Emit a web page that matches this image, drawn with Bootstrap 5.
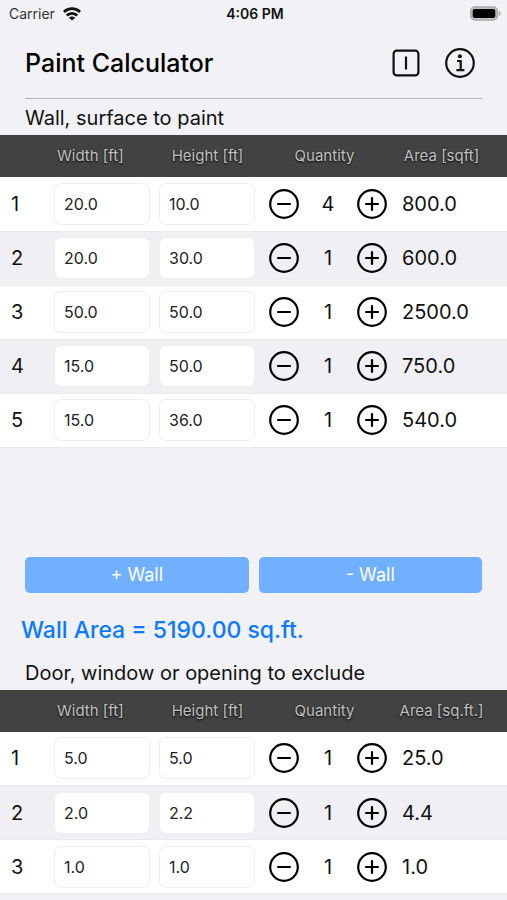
<!DOCTYPE html>
<html lang="en">
<head>
<meta charset="utf-8">
<meta name="viewport" content="width=device-width, initial-scale=1">
<title>Paint Calculator</title>
<link href="https://cdn.jsdelivr.net/npm/bootstrap@5.3.0/dist/css/bootstrap.min.css" rel="stylesheet">
<style>
body { font-family: Inter, "Liberation Sans", sans-serif; background: #f2f1f6; color: #111; overflow-x: hidden; }
.status-bar { height: 28px; padding: 0 6px 0 9px; font-size: 14px; line-height: 28px; color: #333; }
.status-time { color: #111; }
.app-head { height: 71px; margin: 0 25px; border-bottom: 1px solid #b4b3b8; }
.app-title { font-size: 25px; line-height: 32px; font-weight: 500; color: #000; }
.tool-btn { line-height: 0; color: #111; }
.head-tools { gap: 25px; padding-right: 7px; }
.section-label { font-size: 20px; line-height: 34px; padding-top: 2px; margin: 0 25px; font-weight: 400; color: #111; }
.calc-table { table-layout: fixed; width: 100%; color: #111; }
.calc-table .c-num { width: 50px; }
.calc-table .c-qty { width: 129px; }
.calc-table .c-area { width: 118px; }
.calc-table th, .calc-table td { padding: 0; vertical-align: middle; }
.calc-table thead tr { height: 42px; background: #424242; color: #c0c0c0; font-size: 15px; line-height: 20px; text-shadow: 0 1px 2px #000; }
.calc-table thead th { font-weight: 400; text-align: center; white-space: nowrap; }
.calc-table thead .h-width { text-align: left; padding-left: 7px; }
.calc-table thead .h-area { padding-right: 13px; }
.calc-table tbody tr { height: 54px; background: #fff; border-bottom: 1px solid #e9e8ec; font-size: 20px; line-height: 28px; }
.calc-table tbody tr:nth-child(even) { background: #f0eff4; }
.calc-table tbody th { font-weight: 400; padding-left: 11px; }
.calc-table .v-area { padding-left: 13px; }
.size-input { height: 42px; width: calc(100% - 9px); margin-left: 4px; padding: 0 9px; font-size: 16px; color: #222; border: 1px solid #eeedf0; border-radius: 7px; }
.qty { padding: 0 2px 0 9px; }
.wall-space { height: 109px; }
.wall-actions { margin: 0 25px; gap: 10px; }
.btn-wall { height: 36px; font-size: 18px; line-height: 24px; --bs-btn-padding-y: 0; --bs-btn-color: #fff; --bs-btn-bg: #70b0ff; --bs-btn-hover-color: #fff; --bs-btn-hover-bg: #579fff; --bs-btn-border-width: 0; --bs-btn-border-radius: 5px; }
.wall-total { margin: 21px 21px 8px; font-size: 23px; line-height: 32px; font-weight: 500; color: #0a7aff; }
</style>
<script src="https://cdn.jsdelivr.net/npm/bootstrap@5.3.0/dist/js/bootstrap.bundle.min.js"></script>
</head>
<body>
<svg class="d-none" aria-hidden="true">
  <symbol id="i-minus" viewBox="0 0 30 30"><circle cx="15" cy="15" r="13.8" fill="none" stroke="#000" stroke-width="2.2"/><path d="M9 15h12" stroke="#000" stroke-width="2.2" stroke-linecap="round"/></symbol>
  <symbol id="i-plus" viewBox="0 0 30 30"><circle cx="15" cy="15" r="13.8" fill="none" stroke="#000" stroke-width="2.2"/><path d="M9 15h12M15 9v12" stroke="#000" stroke-width="2.2" stroke-linecap="round"/></symbol>
</svg>

<div class="status-bar row g-0">
  <div class="col d-flex align-items-center gap-2"><span>Carrier</span>
    <svg width="18" height="14" viewBox="0 0 18 14" fill="none" stroke="#111" stroke-width="2.7"><path d="M.9 5a11.5 11.5 0 0 1 16.2 0M3.8 8.5a7.4 7.4 0 0 1 10.4 0"/><path d="M9 13.6L5.9 10.7a4.4 4.4 0 0 1 6.2 0z" fill="#111" stroke="none"/></svg>
  </div>
  <div class="col-auto fw-semibold status-time">4:06 PM</div>
  <div class="col d-flex align-items-center justify-content-end">
    <svg width="31" height="16" viewBox="0 0 31 16"><rect x=".8" y="1" width="26.5" height="13" rx="4" fill="#c4c4c6" stroke="#aaa" stroke-width="1.5"/><rect x="2.7" y="3" width="22.6" height="9" rx="2"/><path d="M28.7 5q2 .8 2 2.5t-2 2.5z" fill="#aaa"/></svg>
  </div>
</div>

<header class="app-head d-flex align-items-center justify-content-between">
  <h1 class="app-title mb-0">Paint Calculator</h1>
  <div class="head-tools d-flex align-items-center">
    <button type="button" class="tool-btn btn p-0 border-0" aria-label="Imperial units"><svg width="28" height="28" viewBox="0 0 28 28" fill="none" stroke="#111" stroke-width="2.2"><rect x="1.6" y="1.6" width="24.8" height="24.8" rx="3.2"/><path d="M14 7.5v13"/></svg></button>
    <button type="button" class="tool-btn btn p-0 border-0" aria-label="Information"><svg width="30" height="30" viewBox="0 0 30 30" fill="none" stroke="#111" stroke-width="2.2"><circle cx="15" cy="15" r="13.8"/><circle cx="14.9" cy="8.3" r="2" fill="#111" stroke="none"/><path d="M12 13h3.7v9M11.4 22.2h8"/></svg></button>
  </div>
</header>

<main>
  <h2 class="section-label mb-0">Wall, surface to paint</h2>
  <table class="calc-table">
    <colgroup><col class="c-num"><col><col><col class="c-qty"><col class="c-area"></colgroup>
    <thead><tr><th></th><th class="h-width">Width [ft]</th><th>Height [ft]</th><th>Quantity</th><th class="h-area">Area [sqft]</th></tr></thead>
    <tbody>
      <tr><th scope="row">1</th><td><input class="size-input" aria-label="Wall 1 width" value="20.0"></td><td><input class="size-input" aria-label="Wall 1 height" value="10.0"></td>
        <td><div class="qty d-flex align-items-center justify-content-between"><button type="button" class="tool-btn btn p-0 border-0" aria-label="Decrease"><svg width="30" height="30"><use href="#i-minus"/></svg></button><span>4</span><button type="button" class="tool-btn btn p-0 border-0" aria-label="Increase"><svg width="30" height="30"><use href="#i-plus"/></svg></button></div></td><td class="v-area">800.0</td></tr>
      <tr><th scope="row">2</th><td><input class="size-input" aria-label="Wall 2 width" value="20.0"></td><td><input class="size-input" aria-label="Wall 2 height" value="30.0"></td>
        <td><div class="qty d-flex align-items-center justify-content-between"><button type="button" class="tool-btn btn p-0 border-0" aria-label="Decrease"><svg width="30" height="30"><use href="#i-minus"/></svg></button><span>1</span><button type="button" class="tool-btn btn p-0 border-0" aria-label="Increase"><svg width="30" height="30"><use href="#i-plus"/></svg></button></div></td><td class="v-area">600.0</td></tr>
      <tr><th scope="row">3</th><td><input class="size-input" aria-label="Wall 3 width" value="50.0"></td><td><input class="size-input" aria-label="Wall 3 height" value="50.0"></td>
        <td><div class="qty d-flex align-items-center justify-content-between"><button type="button" class="tool-btn btn p-0 border-0" aria-label="Decrease"><svg width="30" height="30"><use href="#i-minus"/></svg></button><span>1</span><button type="button" class="tool-btn btn p-0 border-0" aria-label="Increase"><svg width="30" height="30"><use href="#i-plus"/></svg></button></div></td><td class="v-area">2500.0</td></tr>
      <tr><th scope="row">4</th><td><input class="size-input" aria-label="Wall 4 width" value="15.0"></td><td><input class="size-input" aria-label="Wall 4 height" value="50.0"></td>
        <td><div class="qty d-flex align-items-center justify-content-between"><button type="button" class="tool-btn btn p-0 border-0" aria-label="Decrease"><svg width="30" height="30"><use href="#i-minus"/></svg></button><span>1</span><button type="button" class="tool-btn btn p-0 border-0" aria-label="Increase"><svg width="30" height="30"><use href="#i-plus"/></svg></button></div></td><td class="v-area">750.0</td></tr>
      <tr><th scope="row">5</th><td><input class="size-input" aria-label="Wall 5 width" value="15.0"></td><td><input class="size-input" aria-label="Wall 5 height" value="36.0"></td>
        <td><div class="qty d-flex align-items-center justify-content-between"><button type="button" class="tool-btn btn p-0 border-0" aria-label="Decrease"><svg width="30" height="30"><use href="#i-minus"/></svg></button><span>1</span><button type="button" class="tool-btn btn p-0 border-0" aria-label="Increase"><svg width="30" height="30"><use href="#i-plus"/></svg></button></div></td><td class="v-area">540.0</td></tr>
    </tbody>
  </table>
  <div class="wall-space"></div>
  <div class="wall-actions d-flex">
    <button type="button" class="btn btn-wall flex-fill w-50">+ Wall</button>
    <button type="button" class="btn btn-wall flex-fill w-50">- Wall</button>
  </div>
  <p class="wall-total">Wall Area = 5190.00 sq.ft.</p>
  <h2 class="section-label">Door, window or opening to exclude</h2>
  <table class="calc-table">
    <colgroup><col class="c-num"><col><col><col class="c-qty"><col class="c-area"></colgroup>
    <thead><tr><th></th><th class="h-width">Width [ft]</th><th>Height [ft]</th><th>Quantity</th><th class="h-area">Area [sq.ft.]</th></tr></thead>
    <tbody>
      <tr><th scope="row">1</th><td><input class="size-input" aria-label="Opening 1 width" value="5.0"></td><td><input class="size-input" aria-label="Opening 1 height" value="5.0"></td>
        <td><div class="qty d-flex align-items-center justify-content-between"><button type="button" class="tool-btn btn p-0 border-0" aria-label="Decrease"><svg width="30" height="30"><use href="#i-minus"/></svg></button><span>1</span><button type="button" class="tool-btn btn p-0 border-0" aria-label="Increase"><svg width="30" height="30"><use href="#i-plus"/></svg></button></div></td><td class="v-area">25.0</td></tr>
      <tr><th scope="row">2</th><td><input class="size-input" aria-label="Opening 2 width" value="2.0"></td><td><input class="size-input" aria-label="Opening 2 height" value="2.2"></td>
        <td><div class="qty d-flex align-items-center justify-content-between"><button type="button" class="tool-btn btn p-0 border-0" aria-label="Decrease"><svg width="30" height="30"><use href="#i-minus"/></svg></button><span>1</span><button type="button" class="tool-btn btn p-0 border-0" aria-label="Increase"><svg width="30" height="30"><use href="#i-plus"/></svg></button></div></td><td class="v-area">4.4</td></tr>
      <tr><th scope="row">3</th><td><input class="size-input" aria-label="Opening 3 width" value="1.0"></td><td><input class="size-input" aria-label="Opening 3 height" value="1.0"></td>
        <td><div class="qty d-flex align-items-center justify-content-between"><button type="button" class="tool-btn btn p-0 border-0" aria-label="Decrease"><svg width="30" height="30"><use href="#i-minus"/></svg></button><span>1</span><button type="button" class="tool-btn btn p-0 border-0" aria-label="Increase"><svg width="30" height="30"><use href="#i-plus"/></svg></button></div></td><td class="v-area">1.0</td></tr>
    </tbody>
  </table>
</main>
</body>
</html>
